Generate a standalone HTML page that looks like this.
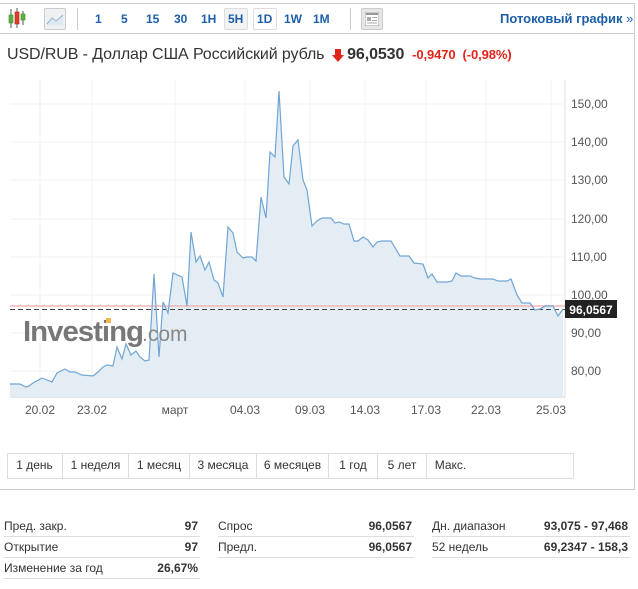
<!DOCTYPE html>
<html><head><meta charset="utf-8"><style>
*{margin:0;padding:0;box-sizing:border-box}
body{width:638px;height:589px;background:#fff;font-family:"Liberation Sans",Arial,sans-serif;position:relative;overflow:hidden;color:#333}
.a{position:absolute}
.tb{color:#1d5ea8;font-weight:bold;font-size:12px}
.pb{position:absolute;top:453px;height:26px;border-right:1px solid #ddd;font-size:12px;color:#333;text-align:center;line-height:24px}
.row{position:absolute;font-size:12px;height:21px;border-bottom:1px solid #ddd}
.row span{position:absolute;top:3px}
.row b{position:absolute;right:2px;top:3px;font-weight:bold;color:#333}
</style></head><body>
<div class="a" style="left:-1px;top:3px;width:636px;height:487px;border:1px solid #ccc;border-left:none"></div>
<div class="a" style="left:0;top:33px;width:635px;border-top:1px solid #ccc"></div>
<svg class="a" style="left:8px;top:8px" width="20" height="22" viewBox="0 0 20 22">
<line x1="3" y1="1" x2="3" y2="20" stroke="#555"/><rect x="1" y="7" width="4" height="8" fill="#5ab341" stroke="#3a8a2a" stroke-width=".6"/>
<line x1="9" y1="0" x2="9" y2="20" stroke="#555"/><rect x="7" y="4" width="4" height="12" fill="#e23a2b" stroke="#a82418" stroke-width=".6"/>
<line x1="15" y1="3" x2="15" y2="17" stroke="#555"/><rect x="13" y="6" width="4" height="6" fill="#5ab341" stroke="#3a8a2a" stroke-width=".6"/>
</svg>
<div class="a" style="left:44px;top:8px;width:22px;height:22px;background:#eef0f2;border:1px solid #ccc;border-radius:2px"></div>
<svg class="a" style="left:46px;top:12px" width="18" height="14"><path d="M1 12 L6 6 L10 9 L17 3 L17 13 L1 13Z" fill="#dde8f3"/><path d="M1 12 L6 6 L10 9 L17 3" stroke="#9ab7d6" fill="none"/></svg>
<div class="a" style="left:77px;top:8px;height:22px;border-left:1px solid #ccc"></div>
<div class="a tb" style="left:95px;top:12px">1</div>
<div class="a tb" style="left:121px;top:12px">5</div>
<div class="a tb" style="left:146px;top:12px">15</div>
<div class="a tb" style="left:174px;top:12px">30</div>
<div class="a tb" style="left:201px;top:12px">1H</div>
<div class="a" style="left:224px;top:8px;width:24px;height:22px;background:#f2f3f4;border:1px solid #ddd;border-radius:2px"></div>
<div class="a tb" style="left:228px;top:12px">5H</div>
<div class="a" style="left:253px;top:8px;width:24px;height:22px;border:1px solid #ddd;border-radius:2px"></div>
<div class="a tb" style="left:257px;top:12px">1D</div>
<div class="a tb" style="left:284px;top:12px">1W</div>
<div class="a tb" style="left:313px;top:12px">1M</div>
<div class="a" style="left:350px;top:8px;height:22px;border-left:1px solid #ccc"></div>
<div class="a" style="left:361px;top:8px;width:22px;height:22px;background:#e6e6e6;border:1px solid #ccc;border-radius:2px"></div>
<svg class="a" style="left:365px;top:12px" width="14" height="14"><rect x="0" y="0" width="14" height="14" fill="#fff" stroke="#999"/><rect x="1" y="1" width="12" height="2" fill="#999"/><rect x="2" y="5" width="4" height="4" fill="#aaa"/><path d="M7 5.5h5M7 8.5h5M2 11h10" stroke="#aaa"/></svg>
<div class="a" style="left:500px;top:11px;font-size:13px;font-weight:bold;color:#1d5ea8">Потоковый график <span style="font-weight:normal">»</span></div>
<div class="a" style="left:7px;top:46px;font-size:16px;color:#333;white-space:nowrap;letter-spacing:-0.1px">USD/RUB - Доллар США Российский рубль <span style="display:inline-block;width:14px"></span> <b style="color:#333">96,0530</b> <b style="color:#e2231a;font-size:13px">&nbsp;-0,9470&nbsp; (-0,98%)</b></div>
<svg class="a" style="left:332px;top:48px" width="12" height="14"><path d="M3 1h6v6h3l-6 7-6-7h3z" fill="#e2231a"/></svg>
<svg class="a" style="left:0;top:80px" width="638" height="340" viewBox="0 80 638 340">
<g stroke="#f0f0f0" stroke-width="1">
<line x1="10" y1="104" x2="563" y2="104"/><line x1="10" y1="142" x2="563" y2="142"/><line x1="10" y1="180" x2="563" y2="180"/><line x1="10" y1="219" x2="563" y2="219"/><line x1="10" y1="257" x2="563" y2="257"/><line x1="10" y1="295" x2="563" y2="295"/><line x1="10" y1="333" x2="563" y2="333"/><line x1="10" y1="371" x2="563" y2="371"/>
<line x1="40" y1="80" x2="40" y2="397"/><line x1="92" y1="80" x2="92" y2="397"/><line x1="175" y1="80" x2="175" y2="397"/><line x1="245" y1="80" x2="245" y2="397"/><line x1="310" y1="80" x2="310" y2="397"/><line x1="365" y1="80" x2="365" y2="397"/><line x1="426" y1="80" x2="426" y2="397"/><line x1="486" y1="80" x2="486" y2="397"/><line x1="551" y1="80" x2="551" y2="397"/>
</g>
<line x1="10" y1="397" x2="565" y2="397" stroke="#ccc"/>
<line x1="565" y1="80" x2="565" y2="397" stroke="#ddd"/>
<polygon fill="#e4ecf4" points="10,397 10,384 20,384 26,387 29,386 33,383 42,378 47,380 52,382 57,373 65,369 70,372 75,372 82,375 93,376 98,372 103,367 107,365 113,366 117,347 122,359 126,344 131,355 136,351 140,357 145,361 149,360 154,274 159,357 163,302 168,313 173,273 182,277 187,306 191,232 196,262 200,256 205,270 209,262 214,280 218,283 223,297 228,227 233,233 237,252 243,258 247,257 252,257 256,261 261,197 266,218 270,152 275,157 279,91 284,177 289,184 293,146 298,140 303,180 307,190 312,226 317,221 322,218 331,218 335,223 339,222 344,224 349,224 354,241 358,241 363,237 368,240 373,247 377,242 382,241 391,241 400,256 409,256 414,263 423,264 428,278 432,274 437,282 447,282 452,281 456,273 461,276 470,276 475,278 480,279 493,279 498,281 507,281 511,279 517,295 522,303 530,303 535,310 540,309 545,306 553,306 558,316 563,309 563,397"/>
<line x1="10" y1="306" x2="565" y2="306" stroke="#f5b5b5" stroke-width="1.5"/>
<line x1="10" y1="309.5" x2="565" y2="309.5" stroke="#444" stroke-dasharray="5,3"/>
<polyline fill="none" stroke="#6fa6d6" stroke-width="1.2" points="10,384 20,384 26,387 29,386 33,383 42,378 47,380 52,382 57,373 65,369 70,372 75,372 82,375 93,376 98,372 103,367 107,365 113,366 117,347 122,359 126,344 131,355 136,351 140,357 145,361 149,360 154,274 159,357 163,302 168,313 173,273 182,277 187,306 191,232 196,262 200,256 205,270 209,262 214,280 218,283 223,297 228,227 233,233 237,252 243,258 247,257 252,257 256,261 261,197 266,218 270,152 275,157 279,91 284,177 289,184 293,146 298,140 303,180 307,190 312,226 317,221 322,218 331,218 335,223 339,222 344,224 349,224 354,241 358,241 363,237 368,240 373,247 377,242 382,241 391,241 400,256 409,256 414,263 423,264 428,278 432,274 437,282 447,282 452,281 456,273 461,276 470,276 475,278 480,279 493,279 498,281 507,281 511,279 517,295 522,303 530,303 535,310 540,309 545,306 553,306 558,316 563,309"/>
<g font-family="Liberation Sans,Arial,sans-serif" font-size="12" fill="#555">
<text x="571" y="108">150,00</text><text x="571" y="146">140,00</text><text x="571" y="184">130,00</text><text x="571" y="223">120,00</text><text x="571" y="261">110,00</text><text x="571" y="299">100,00</text><text x="571" y="337">90,00</text><text x="571" y="375">80,00</text>
<g text-anchor="middle"><text x="40" y="414">20.02</text><text x="92" y="414">23.02</text><text x="175" y="414">март</text><text x="245" y="414">04.03</text><text x="310" y="414">09.03</text><text x="365" y="414">14.03</text><text x="426" y="414">17.03</text><text x="486" y="414">22.03</text><text x="551" y="414">25.03</text></g>
</g>
<rect x="565" y="300" width="52" height="18" fill="#222"/>
<text x="591" y="314" text-anchor="middle" font-family="Liberation Sans,Arial,sans-serif" font-size="12" font-weight="bold" fill="#fff">96,0567</text>
<text x="23" y="341" font-family="Liberation Sans,Arial,sans-serif" font-size="29" font-weight="bold" fill="#777" letter-spacing="-1" textLength="120" lengthAdjust="spacingAndGlyphs">Investing</text>
<text x="142" y="341" font-family="Liberation Sans,Arial,sans-serif" font-size="21" fill="#888">.com</text>
<rect x="106" y="318" width="5" height="5" fill="#f5b54a"/>
</svg>
<div class="a" style="left:7px;top:453px;width:567px;height:26px;border:1px solid #ddd"></div>
<div class="pb" style="left:7px;width:56px">1 день</div>
<div class="pb" style="left:63px;width:66px">1 неделя</div>
<div class="pb" style="left:129px;width:61px">1 месяц</div>
<div class="pb" style="left:190px;width:67px">3 месяца</div>
<div class="pb" style="left:257px;width:72px">6 месяцев</div>
<div class="pb" style="left:329px;width:49px">1 год</div>
<div class="pb" style="left:378px;width:49px">5 лет</div>
<div class="pb" style="left:427px;width:47px;border:none">Макс.</div>
<div class="row" style="left:4px;top:516px;width:196px"><span>Пред. закр.</span><b>97</b></div>
<div class="row" style="left:4px;top:537px;width:196px"><span>Открытие</span><b>97</b></div>
<div class="row" style="left:4px;top:558px;width:196px"><span>Изменение за год</span><b>26,67%</b></div>
<div class="row" style="left:218px;top:516px;width:196px"><span>Спрос</span><b>96,0567</b></div>
<div class="row" style="left:218px;top:537px;width:196px"><span>Предл.</span><b>96,0567</b></div>
<div class="row" style="left:432px;top:516px;width:198px"><span>Дн. диапазон</span><b>93,075 - 97,468</b></div>
<div class="row" style="left:432px;top:537px;width:198px"><span>52 недель</span><b>69,2347 - 158,3</b></div>
</body></html>
